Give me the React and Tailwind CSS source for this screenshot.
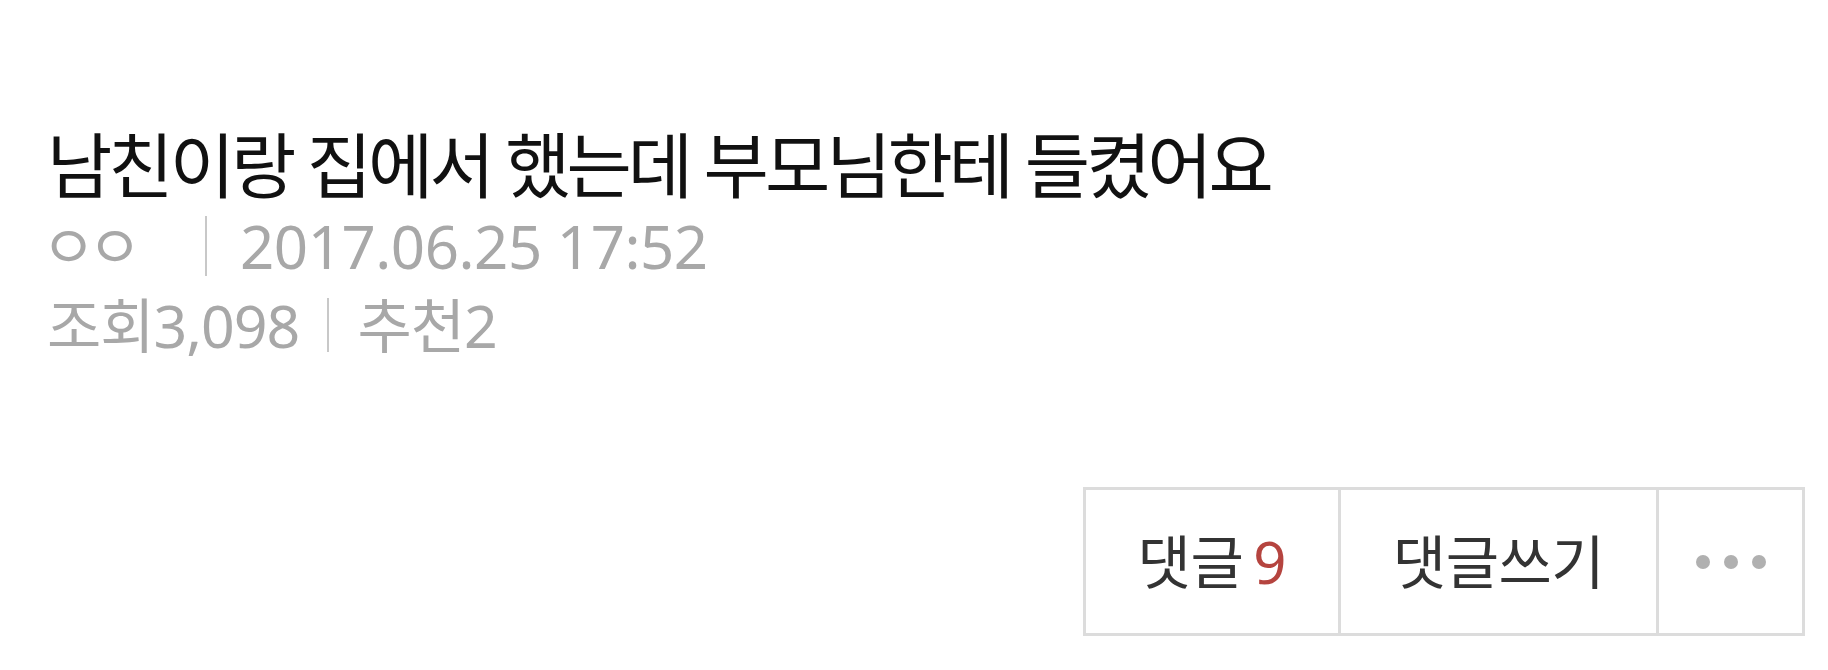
export default function App() {
  const font = { fontFamily: '"Noto Sans", "Noto Sans CJK KR", sans-serif' }

  return (
    <div className="w-[1828px] h-[670px] bg-white overflow-hidden" style={font}>
      <div className="pl-[47px] pt-[124px]">
        <h1 className="text-[71px] leading-[82px] font-normal tracking-[-4px] text-[#111]">
          남친이랑 집에서 했는데 부모님한테 들켰어요
        </h1>
        <div className="flex items-center h-[80px] text-[60px] leading-[60px] text-[#a8a8a8] tracking-[-0.5px]">
          <span className="w-[158px] -ml-[6px] tracking-[-9px]">ㅇㅇ</span>
          <span className="ml-[6px] w-[2px] h-[60px] bg-[#c8c8c8]" />
          <span className="ml-[33px]">2017.06.25 17:52</span>
        </div>
        <div className="flex items-center h-[78px] text-[59px] leading-[59px] text-[#a8a8a8] tracking-[-1px]">
          <span>조회3,098</span>
          <span className="w-[2px] h-[54px] bg-[#c8c8c8] mx-[28px]" />
          <span>추천2</span>
        </div>
      </div>
      <div className="flex justify-end pr-[23px] mt-[123px]">
        <div className="flex h-[149px] border-[3px] border-[#dcdcdc]">
          <button className="w-[255px] border-r-[3px] border-[#dcdcdc] flex items-center justify-center text-[58px] tracking-[-0.5px] text-[#333]">
            댓글<span className="ml-[10px] text-[#b5443f] tracking-normal">9</span>
          </button>
          <button className="w-[318px] border-r-[3px] border-[#dcdcdc] flex items-center justify-center text-[58px] tracking-[-0.5px] text-[#333]">
            댓글쓰기
          </button>
          <button className="w-[143px] flex items-center justify-center gap-[14px]">
            <span className="w-[14px] h-[14px] rounded-full bg-[#b0b0b0]" />
            <span className="w-[14px] h-[14px] rounded-full bg-[#b0b0b0]" />
            <span className="w-[14px] h-[14px] rounded-full bg-[#b0b0b0]" />
          </button>
        </div>
      </div>
    </div>
  )
}
